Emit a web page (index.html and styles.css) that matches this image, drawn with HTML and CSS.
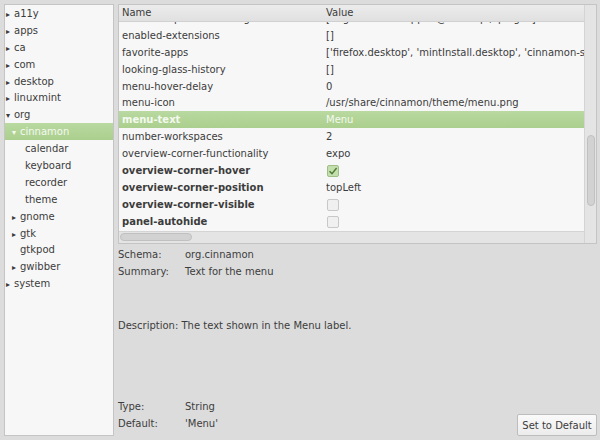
FILE: index.html
```html
<!DOCTYPE html>
<html lang="en">
<head>
    <meta charset="UTF-8">
    <title>dconf Editor</title>
    <link rel="stylesheet" href="styles.css">
</head>
<body>
    <div class="window">
        <div class="dir-tree">
            <div class="node"><span class="arrow">▸</span>a11y</div>
            <div class="node"><span class="arrow">▸</span>apps</div>
            <div class="node"><span class="arrow">▸</span>ca</div>
            <div class="node"><span class="arrow">▸</span>com</div>
            <div class="node"><span class="arrow">▸</span>desktop</div>
            <div class="node"><span class="arrow">▸</span>linuxmint</div>
            <div class="node"><span class="arrow">▾</span>org</div>
            <div class="node lvl1 selected"><span class="arrow">▾</span>cinnamon</div>
            <div class="node lvl2">calendar</div>
            <div class="node lvl2">keyboard</div>
            <div class="node lvl2">recorder</div>
            <div class="node lvl2">theme</div>
            <div class="node lvl1"><span class="arrow">▸</span>gnome</div>
            <div class="node lvl1"><span class="arrow">▸</span>gtk</div>
            <div class="node lvl1"><span class="arrow"></span>gtkpod</div>
            <div class="node lvl1"><span class="arrow">▸</span>gwibber</div>
            <div class="node"><span class="arrow">▸</span>system</div>
        </div>

        <div class="main">
            <div class="keys">
                <div class="keys-inner">
                    <div class="keys-head">
                        <div class="col-name">Name</div>
                        <div class="col-value">Value</div>
                    </div>
                    <div class="keys-body">
                        <div class="keys-rows">
                            <div class="row"><div class="col-name">disabled-open-file-manager</div><div class="col-value">['org.cinnamon.applet@desktop', 'plugin']</div></div>
                            <div class="row"><div class="col-name">enabled-extensions</div><div class="col-value">[]</div></div>
                            <div class="row"><div class="col-name">favorite-apps</div><div class="col-value">['firefox.desktop', 'mintInstall.desktop', 'cinnamon-settings.desktop']</div></div>
                            <div class="row"><div class="col-name">looking-glass-history</div><div class="col-value">[]</div></div>
                            <div class="row"><div class="col-name">menu-hover-delay</div><div class="col-value">0</div></div>
                            <div class="row"><div class="col-name">menu-icon</div><div class="col-value">/usr/share/cinnamon/theme/menu.png</div></div>
                            <div class="row selected bold"><div class="col-name">menu-text</div><div class="col-value">Menu</div></div>
                            <div class="row"><div class="col-name">number-workspaces</div><div class="col-value">2</div></div>
                            <div class="row"><div class="col-name">overview-corner-functionality</div><div class="col-value">expo</div></div>
                            <div class="row bold"><div class="col-name">overview-corner-hover</div><div class="col-value"><span class="check on">
                                <svg width="10" height="10" viewBox="0 0 10 10"><path d="M1.5 5.2 L4 7.6 L8.6 2" fill="none" stroke="#4f7a33" stroke-width="1.4"/></svg>
                            </span></div></div>
                            <div class="row bold"><div class="col-name">overview-corner-position</div><div class="col-value">topLeft</div></div>
                            <div class="row bold"><div class="col-name">overview-corner-visible</div><div class="col-value"><span class="check"></span></div></div>
                            <div class="row bold"><div class="col-name">panel-autohide</div><div class="col-value"><span class="check"></span></div></div>
                            <div class="row bold"><div class="col-name">panel-edit-mode</div><div class="col-value"><span class="check"></span></div></div>
                        </div>
                    </div>
                    <div class="hscroll"><div class="hthumb"></div></div>
                </div>
                <div class="vscroll"><div class="vthumb"></div></div>
            </div>

            <div class="details">
                <div class="info">
                    <div class="info-row"><span class="label">Schema:</span>org.cinnamon</div>
                    <div class="info-row"><span class="label">Summary:</span>Text for the menu</div>
                    <div class="info-row desc">Description: The text shown in the Menu label.</div>
                    <div class="info-row type"><span class="label">Type:</span>String</div>
                    <div class="info-row"><span class="label">Default:</span>'Menu'</div>
                </div>
                <button class="btn">Set to Default</button>
            </div>
        </div>
    </div>
</body>
</html>
```

FILE: styles.css
```css
* { margin: 0; padding: 0; box-sizing: border-box; }

body {
    font-family: "DejaVu Sans", "Liberation Sans", sans-serif;
    font-size: 10px;
    color: #3c3c3c;
    background: #dcdcdc;
    width: 600px;
    height: 440px;
    overflow: hidden;
}

.window {
    display: flex;
    gap: 4px;
    padding: 4px 3px 4px 4px;
    height: 440px;
}

/* left directory tree */
.dir-tree {
    width: 110px;
    flex: none;
    background: #f7f7f7;
    border: 1px solid #c4c4c4;
}

.node {
    height: 16.9px;
    line-height: 17px;
    white-space: nowrap;
}

.node .arrow {
    display: inline-block;
    width: 9px;
    padding-left: 1px;
    font-size: 8px;
    color: #3c3c3c;
}

.node.lvl1 { padding-left: 6px; }
.node.lvl2 { padding-left: 20px; }

.node.selected {
    background: linear-gradient(#b9d9a0, #abcf8e);
    color: #f4f9ef;
}

.node.selected .arrow { color: #f4f9ef; }

/* right side */
.main {
    flex: 1;
    display: flex;
    flex-direction: column;
    min-width: 0;
}

.keys {
    height: 240px;
    display: flex;
    border: 1px solid #c4c4c4;
    background: #f7f7f7;
}

.keys-inner {
    flex: 1;
    min-width: 0;
    display: flex;
    flex-direction: column;
}

.keys-head {
    display: flex;
    height: 17px;
    line-height: 16px;
    background: linear-gradient(#ececec, #e0e0e0);
    border-bottom: 1px solid #d0d0d0;
}

.col-name {
    width: 206px;
    flex: none;
    padding-left: 3px;
    white-space: nowrap;
}

.col-value {
    white-space: nowrap;
    padding-left: 1px;
}

.keys-body {
    flex: 1;
    overflow: hidden;
}

.keys-rows {
    margin-top: -12px;
}

.row {
    display: flex;
    height: 16.9px;
    line-height: 17px;
    overflow: hidden;
}

.row.bold .col-name { font-weight: bold; }

.row.selected {
    background: linear-gradient(#b9d9a0, #abcf8e);
    color: #f4f9ef;
}

.check {
    display: inline-block;
    width: 12px;
    height: 12px;
    margin-top: 3px;
    margin-left: 1px;
    border: 1px solid #c8c8c8;
    border-radius: 2px;
    background: #f0f0f0;
    vertical-align: top;
}

.check.on {
    background: #c4dfae;
    border-color: #9fbf86;
}

.check svg { display: block; }

.hscroll {
    height: 12px;
    background: #e4e4e4;
    border-top: 1px solid #d4d4d4;
    padding: 1px 0 0 1px;
}

.hthumb {
    width: 72px;
    height: 8px;
    border-radius: 4px;
    background: #d2d2d2;
    border: 1px solid #c0c0c0;
}

.vscroll {
    width: 12px;
    flex: none;
    background: #e4e4e4;
    border-left: 1px solid #d4d4d4;
    padding: 130px 0 0 2px;
}

.vthumb {
    width: 8px;
    height: 71px;
    border-radius: 4px;
    background: #d2d2d2;
    border: 1px solid #c0c0c0;
}

/* key details */
.details {
    flex: 1;
    display: flex;
    align-items: flex-end;
    justify-content: space-between;
}

.info {
    padding: 2px 0 4px;
    display: flex;
    flex-direction: column;
    height: 100%;
}

.info-row {
    height: 17px;
    line-height: 17px;
    white-space: nowrap;
}

.info-row .label {
    display: inline-block;
    width: 67px;
}

.info-row.desc { margin-top: 37px; }
.info-row.type { margin-top: auto; }

.btn {
    font-family: inherit;
    font-size: 10px;
    color: #3c3c3c;
    width: 80px;
    height: 22px;
    background: linear-gradient(#fafafa, #ececec);
    border: 1px solid #bdbdbd;
    border-radius: 2px;
}
```
